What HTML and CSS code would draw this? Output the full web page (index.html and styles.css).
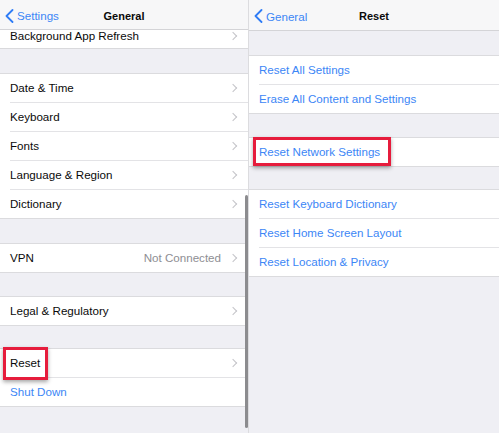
FILE: index.html
```html
<!DOCTYPE html>
<html>
<head>
<meta charset="utf-8">
<link rel="stylesheet" href="styles.css">
</head>
<body>
<div class="screen">
  <section class="panel panel-left">
    <header class="nav nav-left">
      <div class="back">
        <svg class="back-chev" width="9" height="14" viewBox="0 0 9 14"><path d="M7.5 1 L1.5 7 L7.5 13" fill="none" stroke="#2f7cf6" stroke-width="1.8" stroke-linecap="round" stroke-linejoin="round"/></svg>
        <span>Settings</span>
      </div>
      <div class="title">General</div>
      <div></div>
    </header>
    <div class="clip">
      <div class="group group-partial">
        <div class="row last"><div class="row-inner"><span class="label">Background App Refresh</span><span class="chev"></span></div></div>
      </div>
    </div>
    <div class="gap g24"></div>
    <div class="group">
      <div class="row"><div class="row-inner"><span class="label">Date &amp; Time</span><span class="chev"></span></div></div>
      <div class="row"><div class="row-inner"><span class="label">Keyboard</span><span class="chev"></span></div></div>
      <div class="row"><div class="row-inner"><span class="label">Fonts</span><span class="chev"></span></div></div>
      <div class="row"><div class="row-inner"><span class="label">Language &amp; Region</span><span class="chev"></span></div></div>
      <div class="row last"><div class="row-inner"><span class="label">Dictionary</span><span class="chev"></span></div></div>
    </div>
    <div class="gap g24"></div>
    <div class="group">
      <div class="row last"><div class="row-inner"><span class="label">VPN</span><span class="value">Not Connected</span><span class="chev"></span></div></div>
    </div>
    <div class="gap g23"></div>
    <div class="group">
      <div class="row last"><div class="row-inner"><span class="label">Legal &amp; Regulatory</span><span class="chev"></span></div></div>
    </div>
    <div class="gap g22"></div>
    <div class="group">
      <div class="row"><div class="row-inner"><span class="label">Reset</span><span class="chev"></span></div></div>
      <div class="row last"><div class="row-inner"><span class="label blue">Shut Down</span></div></div>
    </div>
    <div class="scroll-indicator"></div>
    <div class="highlight hl-left"></div>
  </section>

  <section class="panel panel-right">
    <header class="nav nav-right">
      <div class="back">
        <svg class="back-chev" width="9" height="14" viewBox="0 0 9 14"><path d="M7.5 1 L1.5 7 L7.5 13" fill="none" stroke="#2f7cf6" stroke-width="1.8" stroke-linecap="round" stroke-linejoin="round"/></svg>
        <span>General</span>
      </div>
      <div class="title">Reset</div>
      <div></div>
    </header>
    <div class="gap g24"></div>
    <div class="group">
      <div class="row"><div class="row-inner"><span class="label blue">Reset All Settings</span></div></div>
      <div class="row last"><div class="row-inner"><span class="label blue">Erase All Content and Settings</span></div></div>
    </div>
    <div class="gap g23"></div>
    <div class="group">
      <div class="row last"><div class="row-inner"><span class="label blue">Reset Network Settings</span></div></div>
    </div>
    <div class="gap g22"></div>
    <div class="group">
      <div class="row"><div class="row-inner"><span class="label blue">Reset Keyboard Dictionary</span></div></div>
      <div class="row"><div class="row-inner"><span class="label blue">Reset Home Screen Layout</span></div></div>
      <div class="row last"><div class="row-inner"><span class="label blue">Reset Location &amp; Privacy</span></div></div>
    </div>
    <div class="highlight hl-right"></div>
  </section>
</div>
</body>
</html>
```

FILE: styles.css
```css
html, body {
  margin: 0;
  padding: 0;
  background: #ffffff;
}

body {
  width: 500px;
  height: 433px;
  overflow: hidden;
  font-family: "Liberation Sans", Arial, sans-serif;
  font-size: 11.6px;
  color: #0a0a0a;
}

.screen {
  display: flex;
  width: 500px;
  height: 433px;
}

.panel {
  position: relative;
  background: #efeff4;
  height: 433px;
  overflow: hidden;
}

.panel-left {
  width: 248px;
  border-right: 1px solid #dcdcdf;
}

.panel-right {
  width: 250px;
}

.nav {
  display: grid;
  grid-template-columns: 1fr auto 1fr;
  align-items: center;
  background: #f7f7f8;
  border-bottom: 1px solid #d4d4d7;
  box-sizing: border-box;
  padding-top: 2px;
}

.nav-left { height: 30px; }
.nav-right { height: 31px; }

.back {
  display: flex;
  align-items: center;
  gap: 3px;
  padding-left: 5px;
  color: #3c86f6;
  font-size: 11.6px;
}

.title {
  font-weight: bold;
  font-size: 11px;
  color: #0a0a0a;
}

.clip {
  height: 19px;
  overflow: hidden;
  background: #fff;
  border-bottom: 1px solid #d9d9dc;
  box-sizing: border-box;
}

.group-partial {
  margin-top: -8px;
}

.gap.g24 { height: 24px; }
.gap.g23 { height: 23px; }
.gap.g22 { height: 22px; }

.group {
  background: #ffffff;
  border-top: 1px solid #dbdbde;
  border-bottom: 1px solid #dbdbde;
}

.group-partial.group { border: none; }

.row {
  padding-left: 10px;
}

.row-inner {
  display: flex;
  align-items: center;
  height: 29px;
  box-sizing: border-box;
  border-bottom: 1px solid #e3e3e6;
  padding-right: 10px;
  padding-bottom: 1px;
}

.row.last .row-inner {
  border-bottom: none;
  height: 28px;
}

.label {
  flex: 1;
  white-space: nowrap;
}

.blue { color: #3c86f6; }

.value {
  color: #8e8e93;
  margin-right: 9px;
}

.chev {
  width: 5px;
  height: 5px;
  border-top: 1.2px solid #c4c4c8;
  border-right: 1.2px solid #c4c4c8;
  transform: rotate(45deg);
  margin-right: 2px;
}

.scroll-indicator {
  position: absolute;
  left: 245px;
  top: 195px;
  width: 2.5px;
  height: 233px;
  border-radius: 2px;
  background: #8c8c8f;
}

.highlight {
  position: absolute;
  border: 3.5px solid #e61c3c;
  box-sizing: border-box;
  box-shadow: 0 2px 4px rgba(0, 0, 0, 0.35);
}

.hl-left {
  left: 3px;
  top: 347px;
  width: 45px;
  height: 33px;
}

.hl-right {
  left: 4px;
  top: 137px;
  width: 138px;
  height: 29px;
}
```
